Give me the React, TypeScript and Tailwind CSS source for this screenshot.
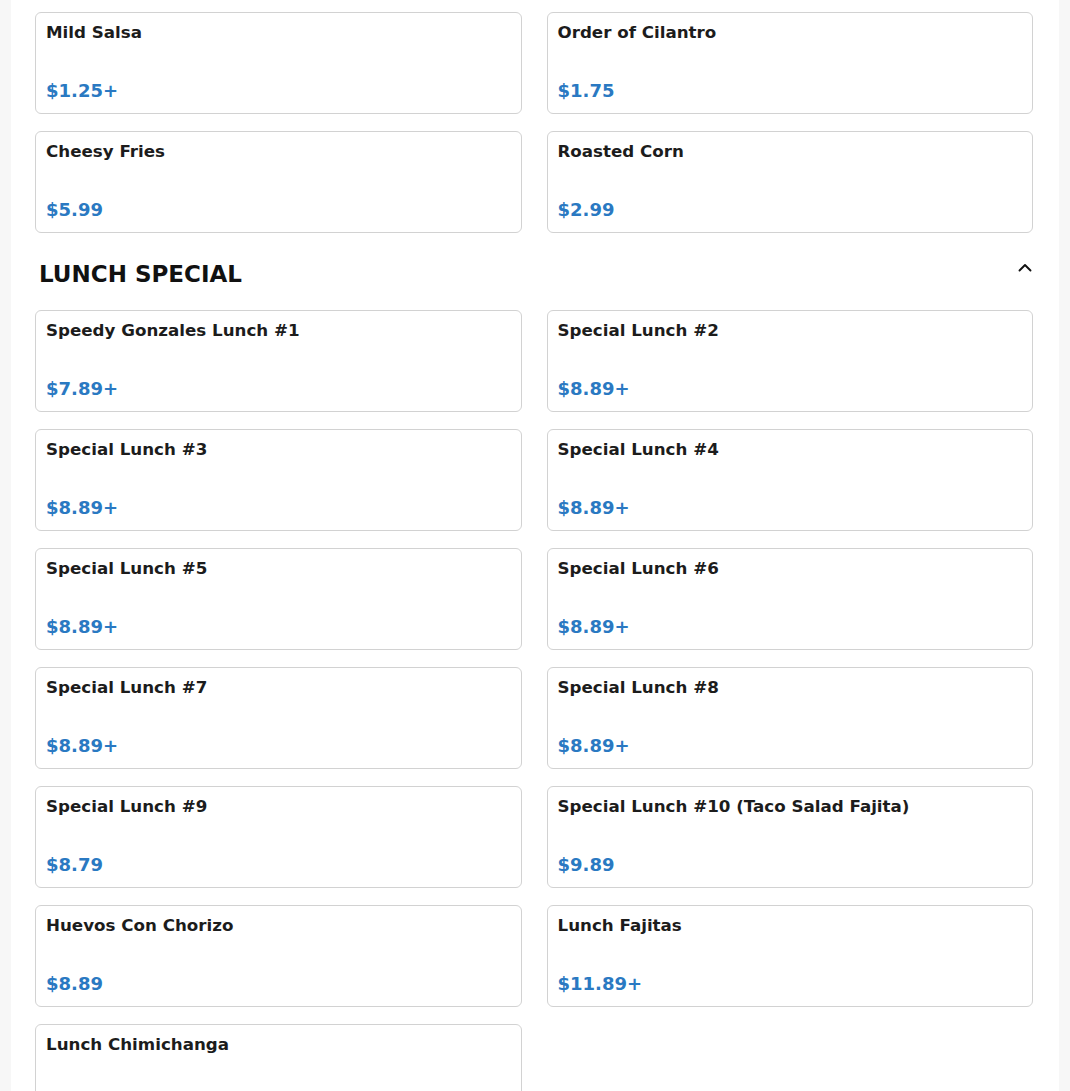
import React from 'react';

type Item = { name: string; price: string };

const sides: Item[] = [
    { name: 'Mild Salsa', price: '$1.25+' },
    { name: 'Order of Cilantro', price: '$1.75' },
    { name: 'Cheesy Fries', price: '$5.99' },
    { name: 'Roasted Corn', price: '$2.99' },
];

const lunch: Item[] = [
    { name: 'Speedy Gonzales Lunch #1', price: '$7.89+' },
    { name: 'Special Lunch #2', price: '$8.89+' },
    { name: 'Special Lunch #3', price: '$8.89+' },
    { name: 'Special Lunch #4', price: '$8.89+' },
    { name: 'Special Lunch #5', price: '$8.89+' },
    { name: 'Special Lunch #6', price: '$8.89+' },
    { name: 'Special Lunch #7', price: '$8.89+' },
    { name: 'Special Lunch #8', price: '$8.89+' },
    { name: 'Special Lunch #9', price: '$8.79' },
    { name: 'Special Lunch #10 (Taco Salad Fajita)', price: '$9.89' },
    { name: 'Huevos Con Chorizo', price: '$8.89' },
    { name: 'Lunch Fajitas', price: '$11.89+' },
    { name: 'Lunch Chimichanga', price: '$8.89' },
];

const MenuCard: React.FC<{ item: Item }> = ({ item }) => (
    <div className="h-[102px] flex flex-col justify-between bg-white border border-[#d2d2d2] rounded-[6px] pt-[7px] pb-[9px] px-[10px]">
        <p className="text-[16.7px] leading-[25px] font-bold text-[#1c1c1c]">{item.name}</p>
        <p className="text-[18px] leading-[27px] font-bold text-[#2a79c2]">{item.price}</p>
    </div>
);

const ChevronUp = () => (
    <svg width="16" height="16" viewBox="0 0 16 16" fill="none" stroke="#111" strokeWidth="1.9" strokeLinecap="round" strokeLinejoin="round">
        <path d="M2.5 10.5 8 5l5.5 5.5" />
    </svg>
);

export default function App() {
    return (
        <div className="min-h-screen bg-[#f7f7f7] pl-[11px] pr-[11px]" style={{ fontFamily: '"DejaVu Sans", Verdana, sans-serif' }}>
            <div className="bg-white min-h-[1091px] pl-[24px] pr-[26px] pt-[12px] pb-[40px]">
                <div className="grid grid-cols-2 gap-x-[25px] gap-y-[17px]">
                    {sides.map(item => (
                        <MenuCard key={item.name} item={item} />
                    ))}
                </div>

                <div className="flex justify-between items-start pl-[4px] mt-[27px] mb-[22px]">
                    <h2 className="text-[23px] leading-[28px] font-bold text-[#111]">LUNCH SPECIAL</h2>
                    <ChevronUp />
                </div>

                <div className="grid grid-cols-2 gap-x-[25px] gap-y-[17px]">
                    {lunch.map(item => (
                        <MenuCard key={item.name} item={item} />
                    ))}
                </div>
            </div>
        </div>
    );
}
